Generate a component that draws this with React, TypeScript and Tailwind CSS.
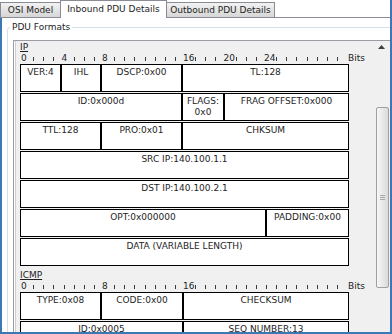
type CellDef = { w: string; t: string };

const ipRows: CellDef[][] = [
  [
    { w: "w-[41px]", t: "VER:4" },
    { w: "w-[40px]", t: "IHL" },
    { w: "w-[81px]", t: "DSCP:0x00" },
    { w: "w-[167px]", t: "TL:128" },
  ],
  [
    { w: "w-[162px]", t: "ID:0x000d" },
    { w: "w-[42px]", t: "FLAGS:\n0x0" },
    { w: "w-[125px]", t: "FRAG OFFSET:0x000" },
  ],
  [
    { w: "w-[81px]", t: "TTL:128" },
    { w: "w-[81px]", t: "PRO:0x01" },
    { w: "w-[167px]", t: "CHKSUM" },
  ],
  [{ w: "w-[329px]", t: "SRC IP:140.100.1.1" }],
  [{ w: "w-[329px]", t: "DST IP:140.100.2.1" }],
  [
    { w: "w-[246px]", t: "OPT:0x000000" },
    { w: "w-[83px]", t: "PADDING:0x00" },
  ],
  [{ w: "w-[329px]", t: "DATA (VARIABLE LENGTH)" }],
];

const icmpRows: CellDef[][] = [
  [
    { w: "w-[81px]", t: "TYPE:0x08" },
    { w: "w-[82px]", t: "CODE:0x00" },
    { w: "w-[166px]", t: "CHECKSUM" },
  ],
  [
    { w: "w-[163px]", t: "ID:0x0005" },
    { w: "w-[166px]", t: "SEQ NUMBER:13" },
  ],
];

function Ruler({ labels }: { labels: Record<number, string> }) {
  const bits = Array.from({ length: 32 }, (_, i) => i);
  return (
    <div className="flex h-[10px] leading-[10px] pl-[1px] items-end">
      {bits.map((i) => (
        <div key={i} className="w-[10.125px] shrink-0 h-[10px] flex items-end">
          {labels[i] !== undefined ? (
            <span className="whitespace-nowrap">{labels[i]}</span>
          ) : (
            <span className="ml-[2px] mb-[2px] w-px h-[4px] bg-[#3a3a3a]" />
          )}
        </div>
      ))}
      <span className="ml-[3px] whitespace-nowrap">Bits</span>
    </div>
  );
}

function Rows({ rows }: { rows: CellDef[][] }) {
  return (
    <div className="flex flex-col">
      {rows.map((r, ri) => (
        <div key={ri} className="flex h-[28px] mt-px">
          {r.map((c, ci) => (
            <div
              key={ci}
              className={`${c.w} shrink-0 h-full border border-black bg-white text-center pt-[2px] leading-[11px] whitespace-pre-line`}
            >
              {c.t}
            </div>
          ))}
        </div>
      ))}
    </div>
  );
}

function Scrollbar() {
  return (
    <div className="w-[17px] shrink-0 flex flex-col bg-[#f0f0f0]">
      <div className="h-[17px] w-full flex justify-center pt-[4px]">
        <svg width="7" height="4" viewBox="0 0 7 4">
          <path d="M3.5 0 L7 4 L0 4 Z" fill="#404040" />
        </svg>
      </div>
      <div className="h-[49px]" />
      <div className="ml-[3px] w-[13px] h-[181px] border border-[#a0a0a0] rounded-[2px] bg-gradient-to-r from-[#f7f7f7] to-[#dadada] flex flex-col items-center justify-center gap-[1px]">
        <div className="w-[5px] h-px bg-[#a8a8a8]" />
        <div className="w-[5px] h-px bg-[#a8a8a8]" />
        <div className="w-[5px] h-px bg-[#a8a8a8]" />
      </div>
    </div>
  );
}

export default function App() {
  return (
    <div className="w-[392px] h-[334px] overflow-hidden bg-white border-r-2 border-[#3d78b5] flex flex-col font-['DejaVu_Sans',Verdana,sans-serif] text-[9px] text-[#1e1e1e] leading-[11px]">
      <div className="h-[18px] flex items-end shrink-0">
        <div className="w-[61px] h-[16px] shrink-0 border border-[#898c95] bg-gradient-to-b from-[#f2f2f2] to-[#d6d6d6] flex items-center justify-center">
          OSI Model
        </div>
        <div className="-ml-px w-[107px] h-[18px] shrink-0 border border-b-0 border-[#898c95] bg-white flex items-center justify-center pb-[1px] relative z-10">
          Inbound PDU Details
        </div>
        <div className="-ml-px w-[109px] h-[16px] shrink-0 border border-[#898c95] bg-gradient-to-b from-[#f2f2f2] to-[#d6d6d6] flex items-center justify-center">
          Outbound PDU Details
        </div>
        <div className="flex-1 h-px bg-[#898c95]" />
      </div>
      <div className="flex-1 min-h-0 overflow-hidden border-l-2 border-b-2 border-[#3d78b5] bg-white">
        <fieldset className="mt-[4px] ml-[5px] w-[420px] h-[400px] border border-[#d5dfe5] rounded-[3px]">
          <legend className="ml-[2px] px-[2px] leading-[11px]">PDU Formats</legend>
          <div className="mt-[7px] ml-[5px] flex w-[400px] h-[330px] border border-[#9a9da3] bg-[#f0f0f0]">
            <div className="w-[359px] shrink-0 pl-[6px] shadow-[inset_1px_0_0_#ffffff,inset_2px_0_0_#cfcfcf]">
              <div className="leading-[12px] h-[12px]">
                <span className="underline underline-offset-[1px]">IP</span>
              </div>
              <Ruler labels={{ 0: "0", 4: "4", 8: "8", 16: "16", 20: "20", 24: "24" }} />
              <Rows rows={ipRows} />
              <div className="mt-[3px] leading-[12px] h-[12px]">
                <span className="underline underline-offset-[1px]">ICMP</span>
              </div>
              <Ruler labels={{ 0: "0", 8: "8", 16: "16" }} />
              <Rows rows={icmpRows} />
            </div>
            <Scrollbar />
          </div>
        </fieldset>
      </div>
    </div>
  );
}
